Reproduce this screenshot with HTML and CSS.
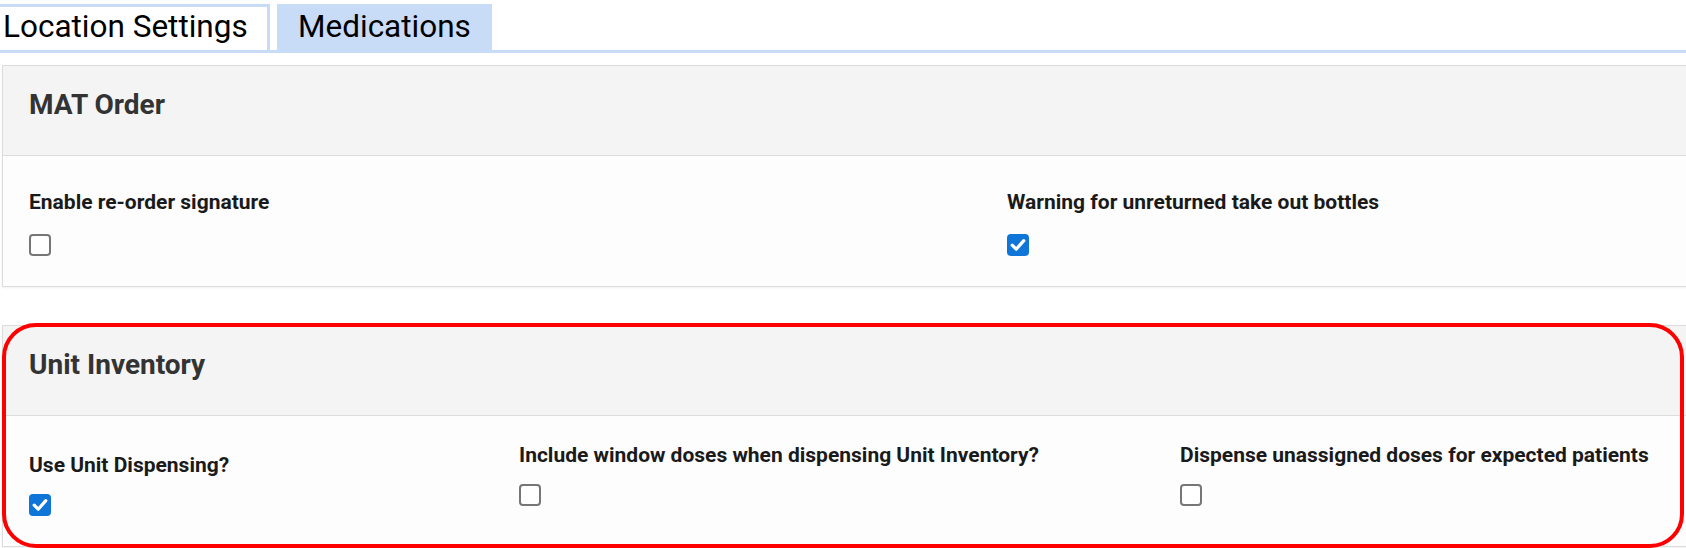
FILE: index.html
```html
<!DOCTYPE html>
<html lang="en">
<head>
<meta charset="utf-8">
<title>Medications</title>
<link rel="stylesheet" href="styles.css">
</head>
<body>
<div class="page">
  <nav class="tabs">
    <div class="tab tab-plain">Location Settings</div>
    <div class="tab tab-active">Medications</div>
  </nav>

  <main class="content">
    <section class="panel">
      <header class="panel-header"><h2 class="panel-title">MAT Order</h2></header>
      <div class="panel-body grid-two">
        <div class="field">
          <div class="field-label">Enable re-order signature</div>
          <span class="check"></span>
        </div>
        <div class="field">
          <div class="field-label">Warning for unreturned take out bottles</div>
          <span class="check is-checked"><svg viewBox="0 0 22 22" width="22" height="22"><path d="M5.2 11.2 L9.2 15.2 L16.8 6.6" fill="none" stroke="#fff" stroke-width="3.2" stroke-linecap="round" stroke-linejoin="round"/></svg></span>
        </div>
      </div>
    </section>

    <div class="annotated">
      <section class="panel">
        <header class="panel-header"><h2 class="panel-title">Unit Inventory</h2></header>
        <div class="panel-body grid-three">
          <div class="field field-low">
            <div class="field-label">Use Unit Dispensing?</div>
            <span class="check is-checked"><svg viewBox="0 0 22 22" width="22" height="22"><path d="M5.2 11.2 L9.2 15.2 L16.8 6.6" fill="none" stroke="#fff" stroke-width="3.2" stroke-linecap="round" stroke-linejoin="round"/></svg></span>
          </div>
          <div class="field">
            <div class="field-label">Include window doses when dispensing Unit Inventory?</div>
            <span class="check"></span>
          </div>
          <div class="field">
            <div class="field-label">Dispense unassigned doses for expected patients</div>
            <span class="check"></span>
          </div>
        </div>
      </section>
      <div class="highlight"></div>
    </div>
  </main>
</div>
</body>
</html>
```

FILE: styles.css
```css
html, body {
  margin: 0;
  padding: 0;
  background: #ffffff;
  overflow: hidden;
}

body {
  font-family: Roboto, "Liberation Sans", Arial, sans-serif;
  color: #1a1a1a;
}

.page {
  width: 1686px;
  height: 548px;
  overflow: hidden;
}

/* ---------- tabs ---------- */
.tabs {
  display: flex;
  gap: 7px;
  padding-top: 4px;
  border-bottom: 3px solid #c8dcf7;
}

.tab {
  font-size: 31.5px;
  line-height: 40px;
  color: #000;
  white-space: nowrap;
}

.tab-plain {
  width: 245px;
  background: #fff;
  border-top: 3px solid #c8dcf7;
  border-right: 3px solid #c8dcf7;
  padding: 0 19px 3px 3px;
}

.tab-active {
  background: #c8dcf7;
  padding: 3px 21px 3px 21px;
}

/* ---------- panels ---------- */
.content {
  padding: 12px 0 0 2px;
}

.panel {
  margin-right: -20px;
  border: 1px solid #dcdcdc;
  background: #fdfdfd;
  box-shadow: 0 1px 2px rgba(0, 0, 0, 0.06);
}

.panel-header {
  background: #f4f4f4;
  border-bottom: 1px solid #dcdcdc;
  padding: 22px 26px 33px;
}

.panel-title {
  margin: 0;
  font-size: 28px;
  line-height: 34px;
  font-weight: 700;
  color: #333333;
}

.panel-body {
  display: grid;
  align-items: start;
  padding: 34px 26px 30px;
}

.grid-two {
  grid-template-columns: 978px 1fr;
}

.grid-three {
  grid-template-columns: 490px 661px 1fr;
  padding-top: 27px;
  padding-bottom: 30px;
}

.field {
  display: flex;
  flex-direction: column;
  align-items: flex-start;
  gap: 20px;
}

.grid-three .field {
  gap: 17px;
}

.field-low {
  margin-top: 10px;
}

.field-label {
  font-size: 21px;
  line-height: 24px;
  font-weight: 700;
  color: #1a1a1a;
  white-space: nowrap;
}

.check {
  display: block;
  box-sizing: border-box;
  width: 22px;
  height: 22px;
  border: 2px solid #767676;
  border-radius: 4px;
  background: #fff;
}

.check.is-checked {
  border: none;
  background: #0f75d8;
}

.check svg {
  display: block;
}

/* ---------- annotation ---------- */
.annotated {
  position: relative;
  margin-top: 38px;
}

.highlight {
  position: absolute;
  top: -2px;
  left: 0;
  width: 1682px;
  bottom: -1px;
  box-sizing: border-box;
  border: 4px solid #ff0000;
  border-radius: 34px;
  pointer-events: none;
}
```
